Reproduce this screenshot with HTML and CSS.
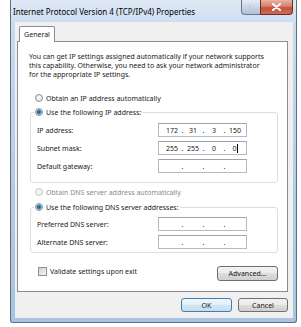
FILE: index.html
```html
<!DOCTYPE html>
<html lang="en">
<head>
  <meta charset="UTF-8" />
  <title>Internet Protocol Version 4 (TCP/IPv4) Properties</title>
  <link rel="stylesheet" href="styles.css">
</head>
<body>
  <div class="window">
    <div class="titlebar">
      <span class="title">Internet Protocol Version 4 (TCP/IPv4) Properties</span>
      <div class="caption-btns">
        <span class="cap-btn help">?</span>
        <span class="cap-btn close">
          <svg width="9" height="8" viewBox="0 0 9 8"><path d="M1 1 L8 7 M8 1 L1 7" stroke="#fff" stroke-width="2" stroke-linecap="round"/></svg>
        </span>
      </div>
    </div>

    <div class="client">
      <div class="tabs"><span class="tab">General</span></div>

      <div class="panel">
        <p class="intro">You can get IP settings assigned automatically if your network supports<br>this capability. Otherwise, you need to ask your network administrator<br>for the appropriate IP settings.</p>

        <div class="option first"><span class="radio"></span>Obtain an IP address automatically</div>

        <fieldset class="group">
          <legend class="option"><span class="radio checked"></span>Use the following IP address:</legend>
          <div class="row">
            <span class="label">IP address:</span>
            <div class="ip-box"><span>172</span><i>.</i><span>31</span><i>.</i><span>3</span><i>.</i><span>150</span></div>
          </div>
          <div class="row">
            <span class="label">Subnet mask:</span>
            <div class="ip-box"><span>255</span><i>.</i><span>255</span><i>.</i><span>0</span><i>.</i><span>0<b class="caret"></b></span></div>
          </div>
          <div class="row">
            <span class="label">Default gateway:</span>
            <div class="ip-box"><span></span><i>.</i><span></span><i>.</i><span></span><i>.</i><span></span></div>
          </div>
        </fieldset>

        <div class="option disabled"><span class="radio"></span>Obtain DNS server address automatically</div>

        <fieldset class="group dns">
          <legend class="option"><span class="radio checked"></span>Use the following DNS server addresses:</legend>
          <div class="row">
            <span class="label">Preferred DNS server:</span>
            <div class="ip-box"><span></span><i>.</i><span></span><i>.</i><span></span><i>.</i><span></span></div>
          </div>
          <div class="row">
            <span class="label">Alternate DNS server:</span>
            <div class="ip-box"><span></span><i>.</i><span></span><i>.</i><span></span><i>.</i><span></span></div>
          </div>
        </fieldset>

        <div class="validate">
          <label class="check"><span class="checkbox"></span>Validate settings upon exit</label>
          <button class="btn advanced">Advanced...</button>
        </div>
      </div>

      <div class="actions">
        <button class="btn ok">OK</button>
        <button class="btn cancel">Cancel</button>
      </div>
    </div>
  </div>
</body>
</html>
```

FILE: styles.css
```css
* {
  box-sizing: border-box;
}

body {
  margin: 0;
  background: #fff;
  font-family: "Noto Sans", sans-serif;
  font-size: 7px;
  color: #1a1a1a;
}

.window {
  margin-left: 10px;
  width: 287px;
  height: 323px;
  display: flex;
  flex-direction: column;
  border: 1px solid #5e6e82;
  border-top: none;
  border-radius: 0 0 3px 3px;
  background: linear-gradient(#dfe9f5, #c8daef 30px, #b3cae7 60%, #a9c3e3);
}

/* title bar */
.titlebar {
  height: 22px;
  display: flex;
  align-items: flex-start;
  padding: 0 3px 0 2px;
}

.title {
  flex: 1;
  padding-top: 7px;
  font-size: 8px;
  line-height: 10px;
  color: #000;
}

.caption-btns {
  display: flex;
}

.cap-btn {
  height: 15px;
  display: flex;
  align-items: center;
  justify-content: center;
  border: 1px solid #6b778a;
  border-top: none;
}

.help {
  width: 19px;
  border-right: none;
  border-radius: 0 0 0 4px;
  background: linear-gradient(#e6edf6, #c9d6e6 50%, #b0c1d6);
  color: #f4f7fb;
  font-weight: bold;
  font-size: 8px;
  text-shadow: 0 0 1px #55647a;
}

.close {
  width: 33px;
  border-color: #6b2d25;
  border-radius: 0 0 4px 0;
  background: linear-gradient(#eab1a2, #d5806d 45%, #c4503b 55%, #cf6a55);
}

/* client area */
.client {
  flex: 1;
  margin: 0 3px 4px 4px;
  background: #f0f0f0;
  padding: 4px 5px 6px 2px;
  display: flex;
  flex-direction: column;
}

.tabs {
  display: flex;
  padding-left: 2px;
}

.tab {
  position: relative;
  height: 16px;
  width: 36px;
  margin-bottom: -1px;
  border: 1px solid #898c95;
  border-bottom: none;
  border-radius: 2px 2px 0 0;
  background: #fff;
  text-align: center;
  line-height: 15px;
}

.panel {
  flex: 1;
  border: 1px solid #898c95;
  background: #fff;
  padding: 10px 8px 0 11px;
  display: flex;
  flex-direction: column;
}

.intro {
  margin: 0;
  line-height: 9px;
}

/* radios */
.option {
  display: flex;
  align-items: center;
  height: 12px;
  gap: 3px;
}

.option.first {
  margin-top: 13px;
  padding-left: 6px;
}

.option.disabled {
  margin-top: 3px;
  padding-left: 6px;
  color: #8a8a8a;
}

.radio {
  width: 8px;
  height: 8px;
  border-radius: 50%;
  border: 1px solid #8e8f8f;
  background: radial-gradient(circle at 50% 40%, #fff, #d8d8d8);
}

.radio.checked {
  background: radial-gradient(circle, #185a8e 0, #2f83bd 1.8px, #8fc3e3 2.6px, #f4f4f4 3px, #dadada);
}

.option.disabled .radio {
  border-color: #c5c5c5;
  background: #f3f3f3;
}

/* group boxes */
.group {
  margin: 2px 0 0 1px;
  width: 248px;
  border: 1px solid #d5dfe5;
  border-radius: 3px;
  padding: 5px 30px 9px 6px;
  display: flex;
  flex-direction: column;
  gap: 4px;
}

.group legend {
  padding: 0 1px;
  margin-left: -3px;
}

.group.dns {
  margin-top: 3px;
  padding: 4px 30px 3px 6px;
}

.row {
  display: flex;
  align-items: center;
  height: 14px;
}

.label {
  flex: 1;
}

.ip-box {
  width: 89px;
  height: 14px;
  border: 1px solid #b5b9c1;
  border-top-color: #9ea3ab;
  background: #fff;
  display: flex;
  align-items: center;
  padding-left: 4px;
}

.ip-box span {
  width: 18px;
  text-align: center;
}

.ip-box i {
  width: 3px;
  font-style: normal;
  text-align: center;
}

.caret {
  display: inline-block;
  width: 1px;
  height: 9px;
  background: #000;
  vertical-align: -2px;
}

/* bottom of the tab */
.validate {
  margin-top: 13px;
  display: flex;
  align-items: flex-start;
  justify-content: space-between;
  padding-right: 1px;
}

.check {
  display: flex;
  align-items: center;
  gap: 3px;
  padding-left: 9px;
  height: 10px;
}

.checkbox {
  width: 9px;
  height: 9px;
  border: 1px solid #8e8f8f;
  background: linear-gradient(135deg, #d0d0d0, #f5f5f5);
}

.btn {
  font-family: "Noto Sans", sans-serif;
  font-size: 7px;
  color: #1a1a1a;
  height: 15px;
  padding: 0;
  border: 1px solid #707070;
  border-radius: 3px;
  background: linear-gradient(#f2f2f2, #ebebeb 50%, #dddddd 50%, #cfcfcf);
}

.advanced {
  width: 61px;
}

.actions {
  display: flex;
  justify-content: flex-end;
  gap: 6px;
  margin-top: 6px;
}

.actions .btn {
  height: 14px;
}

.ok {
  width: 51px;
  border-color: #3c7fb1;
  background: linear-gradient(#eef6fb, #e3eff8 50%, #d3e6f4 50%, #c6def0);
}

.cancel {
  width: 50px;
}
```
